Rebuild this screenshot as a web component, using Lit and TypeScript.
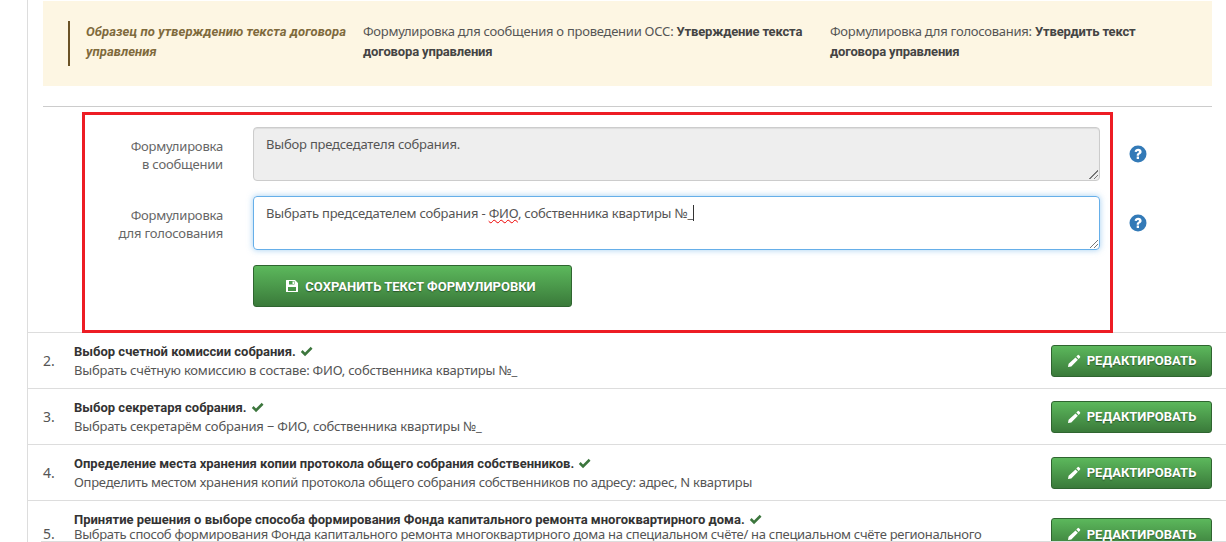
import { LitElement, html, css, svg } from "lit";
import { customElement } from "lit/decorators.js";

const check = html`<svg class="check" viewBox="0 0 16 13"><path d="M1 7l2.200-2.200 3 3 7-7L15.400 3 6.200 12.200z" fill="currentColor"/></svg>`;
const pencil = html`<svg class="ic" viewBox="0 0 14 14"><path d="M10.600 1.200a1 1 0 0 1 1.400 0l1 1a1 1 0 0 1 0 1.400l-1.300 1.300-2.400-2.400zM8.500 3.400l2.400 2.400-6.600 6.600L1 13l.6-3.300z" fill="currentColor"/></svg>`;
const floppy = html`<svg class="ic" viewBox="0 0 14 14"><path fill-rule="evenodd" d="M1.500 1H10l3 3v8.500a.5.5 0 0 1-.5.5h-11a.5.5 0 0 1-.5-.5v-11a.5.5 0 0 1 .5-.5zM4 2v3.500h5.500V2zM3 8v4h8V8zM7.500 2.500H9V5H7.500z" fill="currentColor"/></svg>`;
const help = svg`<svg class="help" viewBox="0 0 18 18"><circle cx="9" cy="9" r="8.500" fill="#337ab7"/><path d="M5.600 6.800C5.800 4.800 7.300 3.800 9.200 3.800c2 0 3.400 1.200 3.400 2.900 0 1.400-.9 2-1.800 2.600-.6.400-.8.700-.8 1.400H7.700c0-1.400.4-2 1.300-2.600.7-.5 1-.8 1-1.300 0-.6-.4-.9-1-.9-.7 0-1.100.4-1.200 1.100zM7.700 11.500H10V14H7.700z" fill="#fff"/></svg>`;

const rows = [
  ["2.", "Выбор счетной комиссии собрания.", "Выбрать счётную комиссию в составе: ФИО, собственника квартиры №_", ""],
  ["3.", "Выбор секретаря собрания.", "Выбрать секретарём собрания − ФИО, собственника квартиры №_", ""],
  ["4.", "Определение места хранения копии протокола общего собрания собственников.", "Определить местом хранения копий протокола общего собрания собственников по адресу: адрес, N квартиры", "tight"],
];

@customElement("app-root")
export class AppRoot extends LitElement {
  static styles = css`
    :host { display: block; height: 542px; overflow: hidden; font-family: "Noto Sans", sans-serif; font-size: 13px; letter-spacing: -0.2px; color: #555; background: #fff; position: relative; }
    b, .title, .lead, .btn { font-family: Roboto, "Noto Sans", sans-serif; font-weight: 700; font-size: 13px; letter-spacing: 0; }
    .page { margin-left: 27px; border-left: 1px solid #ddd; padding-top: 1px; }
    .banner { margin-left: 15px; width: 1169px; height: 85px; box-sizing: border-box; background: #fdf6e3; padding: 20px 25px; display: grid; grid-template-columns: 295px 467px 1fr; line-height: 20px; letter-spacing: -0.25px; }
    .lead { border-left: 2px solid #6b5327; padding: 1px 0 0 16px; height: 44px; font-style: italic; color: #7f6a3c; margin-right: 8px; letter-spacing: 0.1px; }
    .banner b { color: #444; line-height: 0; letter-spacing: -0.15px; }
    hr { margin: 20px 0 0 15px; width: 1169px; border: 0; border-top: 1px solid #ccc; }
    .form { display: grid; grid-template-columns: 195px 847px 47px; column-gap: 30px; row-gap: 15px; padding: 20px 0 25px; border-bottom: 1px solid #ddd; align-items: start; }
    .label { text-align: right; line-height: 18px; padding-top: 10px; color: #666; }
    .ta { height: 54px; box-sizing: border-box; border: 1px solid #ccc; border-radius: 4px; padding: 7px 12px; line-height: 18px; position: relative; }
    .ta.off { background: #eee; box-shadow: inset 0 1px 1px rgba(0,0,0,.075); }
    .ta.on { border-color: #66afe9; box-shadow: 0 0 6px rgba(102,175,233,.6); color: #555; }
    .grip { position: absolute; right: 1px; bottom: 1px; width: 9px; height: 9px; background: linear-gradient(135deg, transparent 50%, #777 50%, #777 58%, transparent 58%, transparent 75%, #777 75%, #777 83%, transparent 83%); }
    .cursor { display: inline-block; width: 1px; height: 16px; background: #333; vertical-align: -3px; }
    .typo { text-decoration: underline wavy #e00; text-decoration-thickness: 1px; }
    .help { width: 18px; height: 18px; display: block; margin-top: 18px; margin-left: -1px; }
    .btn { display: inline-flex; align-items: center; justify-content: center; gap: 6px; box-sizing: border-box; border: 1px solid #2f6530; border-radius: 3px; background: linear-gradient(#5cb85c, #3a7a3a); color: #fff; text-transform: uppercase; text-shadow: 0 1px 1px rgba(0,0,0,.4); }
    .ic { width: 14px; height: 14px; flex: none; }
    .save { grid-column: 2; width: 319px; height: 42px; padding-right: 4px; }
    .row { height: 55px; border-bottom: 1px solid #ddd; display: grid; grid-template-columns: 31px 977px 161px; padding-left: 15px; align-items: center; box-sizing: content-box; }
    .num { font-size: 14px; letter-spacing: 0; }
    .title { color: #333; line-height: 19px; }
    .desc { line-height: 19px; }
    .desc.tight { letter-spacing: -0.27px; }
    .desc.tighter { letter-spacing: -0.29px; }
    .check { width: 13px; height: 11px; color: #3c763d; margin-left: 1px; vertical-align: -1px; }
    .edit { height: 32px; width: 161px; }
    .row.last { height: 60px; align-items: start; padding-top: 11px; border-bottom: 0; }
    .row.last .num { margin-top: 12px; }
    .row.last .title, .row.last .desc { line-height: 15px; }
    .row.last .edit { margin-top: 6px; }
    .outline { position: absolute; left: 82px; top: 112px; width: 1031px; height: 221px; box-sizing: border-box; border: 3px solid #ed1c24; pointer-events: none; }
    .foot { position: absolute; left: 41px; right: 0; bottom: 0; height: 1px; background: #ddd; }
  `;

  renderRow(r: string[]) {
    return html`<div class="row">
      <div class="num">${r[0]}</div>
      <div><div class="title">${r[1]} ${check}</div><div class="desc ${r[3]}">${r[2]}</div></div>
      <div class="btn edit">${pencil}Редактировать</div>
    </div>`;
  }

  render() {
    return html`<div class="page">
      <div class="banner">
        <div class="lead">Образец по утверждению текста договора управления</div>
        <div>Формулировка для сообщения о проведении ОСС: <b>Утверждение текста договора управления</b></div>
        <div>Формулировка для голосования: <b>Утвердить текст договора управления</b></div>
      </div>
      <hr />
      <div class="form">
        <div class="label">Формулировка<br />в сообщении</div>
        <div class="ta off">Выбор председателя собрания.<span class="grip"></span></div>
        ${help}
        <div class="label">Формулировка<br />для голосования</div>
        <div class="ta on">Выбрать председателем собрания - <span class="typo">ФИО</span>, собственника квартиры №_<span class="cursor"></span><span class="grip"></span></div>
        ${help}
        <div class="btn save">${floppy}Сохранить текст формулировки</div>
      </div>
      ${rows.map((r) => this.renderRow(r))}
      <div class="row last">
        <div class="num">5.</div>
        <div><div class="title">Принятие решения о выборе способа формирования Фонда капитального ремонта многоквартирного дома. ${check}</div><div class="desc tighter">Выбрать способ формирования Фонда капитального ремонта многоквартирного дома на специальном счёте/ на специальном счёте регионального</div></div>
        <div class="btn edit">${pencil}Редактировать</div>
      </div>
    </div>
    <div class="outline"></div>
    <div class="foot"></div>`;
  }
}
